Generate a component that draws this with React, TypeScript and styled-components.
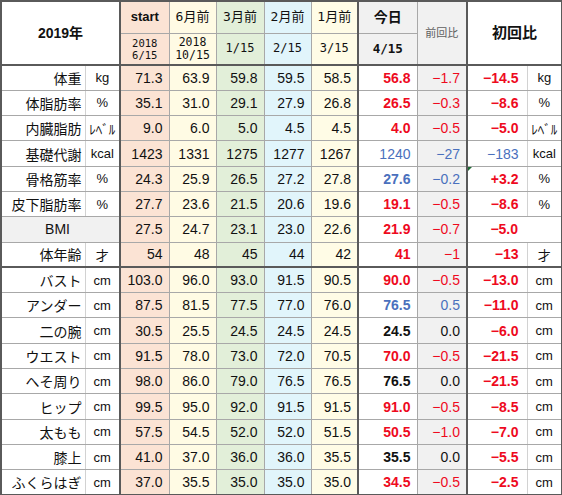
import styled, { createGlobalStyle, css } from 'styled-components';

type Tone = 'red' | 'blue' | 'plain';

type Measure = {
  label: string;
  unit?: string;
  past: string[];
  today: string;
  diff: string;
  total: string;
  tone: Tone; // today + diff
  totalTone?: Tone;
  light?: boolean;
  flag?: boolean;
};

const M = '\u2212';

const measures: Measure[] = [
  { label: '体重', unit: 'kg', past: ['71.3', '63.9', '59.8', '59.5', '58.5'], today: '56.8', diff: `${M}1.7`, total: `${M}14.5`, tone: 'red' },
  { label: '体脂肪率', unit: '%', past: ['35.1', '31.0', '29.1', '27.9', '26.8'], today: '26.5', diff: `${M}0.3`, total: `${M}8.6`, tone: 'red' },
  { label: '内臓脂肪', unit: 'ﾚﾍﾞﾙ', past: ['9.0', '6.0', '5.0', '4.5', '4.5'], today: '4.0', diff: `${M}0.5`, total: `${M}5.0`, tone: 'red' },
  { label: '基礎代謝', unit: 'kcal', past: ['1423', '1331', '1275', '1277', '1267'], today: '1240', diff: `${M}27`, total: `${M}183`, tone: 'blue', totalTone: 'blue', light: true },
  { label: '骨格筋率', unit: '%', past: ['24.3', '25.9', '26.5', '27.2', '27.8'], today: '27.6', diff: `${M}0.2`, total: '+3.2', tone: 'blue', totalTone: 'red', flag: true },
  { label: '皮下脂肪率', unit: '%', past: ['27.7', '23.6', '21.5', '20.6', '19.6'], today: '19.1', diff: `${M}0.5`, total: `${M}8.6`, tone: 'red' },
  { label: 'BMI', past: ['27.5', '24.7', '23.1', '23.0', '22.6'], today: '21.9', diff: `${M}0.7`, total: `${M}5.0`, tone: 'red' },
  { label: '体年齢', unit: '才', past: ['54', '48', '45', '44', '42'], today: '41', diff: `${M}1`, total: `${M}13`, tone: 'red' },
  { label: 'バスト', unit: 'cm', past: ['103.0', '96.0', '93.0', '91.5', '90.5'], today: '90.0', diff: `${M}0.5`, total: `${M}13.0`, tone: 'red' },
  { label: 'アンダー', unit: 'cm', past: ['87.5', '81.5', '77.5', '77.0', '76.0'], today: '76.5', diff: '0.5', total: `${M}11.0`, tone: 'blue', totalTone: 'red' },
  { label: '二の腕', unit: 'cm', past: ['30.5', '25.5', '24.5', '24.5', '24.5'], today: '24.5', diff: '0.0', total: `${M}6.0`, tone: 'plain', totalTone: 'red' },
  { label: 'ウエスト', unit: 'cm', past: ['91.5', '78.0', '73.0', '72.0', '70.5'], today: '70.0', diff: `${M}0.5`, total: `${M}21.5`, tone: 'red' },
  { label: 'へそ周り', unit: 'cm', past: ['98.0', '86.0', '79.0', '76.5', '76.5'], today: '76.5', diff: '0.0', total: `${M}21.5`, tone: 'plain', totalTone: 'red' },
  { label: 'ヒップ', unit: 'cm', past: ['99.5', '95.0', '92.0', '91.5', '91.5'], today: '91.0', diff: `${M}0.5`, total: `${M}8.5`, tone: 'red' },
  { label: '太もも', unit: 'cm', past: ['57.5', '54.5', '52.0', '52.0', '51.5'], today: '50.5', diff: `${M}1.0`, total: `${M}7.0`, tone: 'red' },
  { label: '膝上', unit: 'cm', past: ['41.0', '37.0', '36.0', '36.0', '35.5'], today: '35.5', diff: '0.0', total: `${M}5.5`, tone: 'plain', totalTone: 'red' },
  { label: 'ふくらはぎ', unit: 'cm', past: ['37.0', '35.5', '35.0', '35.0', '35.0'], today: '34.5', diff: `${M}0.5`, total: `${M}2.5`, tone: 'red' },
];

const periods = [
  { name: 'start', date: ['2018', '6/15'], bg: '#fbe3d4', dateSize: 10.5 },
  { name: '6月前', date: ['2018', '10/15'], bg: '#fffbe4', dateSize: 11.5 },
  { name: '3月前', date: ['1/15'], bg: '#e2efd9', dateSize: 12 },
  { name: '2月前', date: ['2/15'], bg: '#e1f5fb', dateSize: 12 },
  { name: '1月前', date: ['3/15'], bg: '#fffce6', dateSize: 12 },
];

const toneColor: Record<Tone, string> = {
  red: '#ee0a1e',
  blue: '#4a70bd',
  plain: '#111',
};

const dark = '#5a5a5a';
const thin = '#a8a8a8';
const soft = '#d2d2d2';
const shade = '#f1f1f1';
const mono = "'DejaVu Sans Mono', 'Noto Sans CJK JP', monospace";

const GlobalStyle = createGlobalStyle`
  body {
    margin: 0;
    background: #fff;
    color: #111;
  }
`;

const Sheet = styled.table`
  border-collapse: collapse;
  table-layout: fixed;
  width: 561px;
  border: 2px solid ${dark};
  font-family: 'Liberation Sans', 'Noto Sans CJK JP', sans-serif;
  font-size: 14px;
`;

const Col = styled.col<{ $w: number; $thick?: boolean }>`
  width: ${(p) => p.$w}px;
  ${(p) => p.$thick && `border-right: 2px solid ${dark};`}
`;

const HeadRow = styled.tr<{ $end?: boolean }>`
  height: 32px;
  ${(p) => p.$end && `border-bottom: 2px solid ${dark};`}
`;

const Row = styled.tr<{ $end?: boolean }>`
  height: 25.3px;
  ${(p) => p.$end && `border-bottom: 2px solid ${dark};`}
`;

const Cell = styled.td`
  border-right: 1px solid ${thin};
  border-bottom: 1px solid ${thin};
  padding: 0;
  line-height: 1;
  white-space: nowrap;
  overflow: hidden;
`;

const HeadCell = styled(Cell)<{
  $bg?: string;
  $bold?: boolean;
  $size?: number;
  $mono?: boolean;
  $muted?: boolean;
}>`
  text-align: center;
  background: ${(p) => p.$bg ?? '#fff'};
  font-size: ${(p) => p.$size ?? 13}px;
  font-weight: ${(p) => (p.$bold ? 700 : 400)};
  color: ${(p) => (p.$muted ? '#606060' : '#111')};
  ${(p) =>
    p.$mono &&
    css`
      font-family: ${mono};
    `}
  line-height: 1.15;
`;

const LabelCell = styled(Cell)<{ $shaded?: boolean }>`
  font-family: 'Noto Sans CJK JP', sans-serif;
  font-size: 14px;
  text-align: right;
  padding-right: 3px;
  background: #fff;
  border-right-color: ${soft};
  ${(p) =>
    p.$shaded &&
    css`
      text-align: center;
      padding-right: 6px;
      background: ${shade};
      border-right-color: ${thin};
      font-family: 'Liberation Sans', sans-serif;
    `}
`;

const UnitCell = styled(Cell)<{ $cjk?: boolean }>`
  text-align: center;
  font-size: 13px;
  ${(p) =>
    p.$cjk &&
    css`
      font-family: 'Noto Sans CJK JP', sans-serif;
    `}
`;

const NumCell = styled(Cell)<{ $bg?: string; $tone?: Tone; $bold?: boolean }>`
  text-align: right;
  padding-right: 6px;
  background: ${(p) => p.$bg ?? '#fff'};
  color: ${(p) => toneColor[p.$tone ?? 'plain']};
  font-weight: ${(p) => (p.$bold ? 700 : 400)};
`;

const TotalCell = styled(NumCell)<{ $flag?: boolean; $wide?: boolean }>`
  position: relative;
  padding-right: ${(p) => (p.$wide ? 43 : 8)}px;
  border-right-color: ${(p) => (p.$wide ? thin : soft)};
  ${(p) =>
    p.$flag &&
    css`
      &::before {
        content: '';
        position: absolute;
        left: 0;
        top: 0;
        border-top: 4px solid #1e6b34;
        border-right: 4px solid transparent;
      }
    `}
`;

const unitIsCjk = (u?: string) => !!u && /[^\x00-\x7f]/.test(u);

export default function App() {
  return (
    <>
      <GlobalStyle />
      <Sheet>
        <colgroup>
          <Col $w={84} />
          <Col $w={35} $thick />
          <Col $w={49} />
          <Col $w={47} />
          <Col $w={48} />
          <Col $w={47} />
          <Col $w={47} $thick />
          <Col $w={59} />
          <Col $w={50} $thick />
          <Col $w={60} />
          <Col $w={35} />
        </colgroup>
        <thead>
          <HeadRow>
            <HeadCell rowSpan={2} colSpan={2} $bold $size={14}>
              2019年
            </HeadCell>
            {periods.map((p) => (
              <HeadCell
                key={p.name}
                $bg={p.bg}
                $bold={p.name === 'start'}
                $mono={p.name !== 'start'}
              >
                {p.name}
              </HeadCell>
            ))}
            <HeadCell $bg={shade} $bold $size={14}>
              今日
            </HeadCell>
            <HeadCell rowSpan={2} $bg={shade} $size={11} $muted>
              前回比
            </HeadCell>
            <HeadCell rowSpan={2} colSpan={2} $bold $size={15}>
              初回比
            </HeadCell>
          </HeadRow>
          <HeadRow $end>
            {periods.map((p) => (
              <HeadCell key={p.name} $bg={p.bg} $mono $size={p.dateSize}>
                {p.date.map((d, i) => (
                  <div key={i}>{d}</div>
                ))}
              </HeadCell>
            ))}
            <HeadCell $bg={shade} $mono $bold $size={12.5}>
              4/15
            </HeadCell>
          </HeadRow>
        </thead>
        <tbody>
          {measures.map((m, i) => (
            <Row key={m.label} $end={i === 7}>
              {m.unit ? (
                <>
                  <LabelCell>{m.label}</LabelCell>
                  <UnitCell $cjk={unitIsCjk(m.unit)}>{m.unit}</UnitCell>
                </>
              ) : (
                <LabelCell colSpan={2} $shaded>
                  {m.label}
                </LabelCell>
              )}
              {m.past.map((v, j) => (
                <NumCell key={j} $bg={periods[j].bg}>
                  {v}
                </NumCell>
              ))}
              <NumCell $tone={m.tone} $bold={!m.light}>
                {m.today}
              </NumCell>
              <NumCell $bg={shade} $tone={m.tone}>
                {m.diff}
              </NumCell>
              {m.unit ? (
                <>
                  <TotalCell $tone={m.totalTone ?? m.tone} $bold={!m.light} $flag={m.flag}>
                    {m.total}
                  </TotalCell>
                  <UnitCell $cjk={unitIsCjk(m.unit)}>{m.unit}</UnitCell>
                </>
              ) : (
                <TotalCell colSpan={2} $wide $tone={m.totalTone ?? m.tone} $bold>
                  {m.total}
                </TotalCell>
              )}
            </Row>
          ))}
        </tbody>
      </Sheet>
    </>
  );
}
